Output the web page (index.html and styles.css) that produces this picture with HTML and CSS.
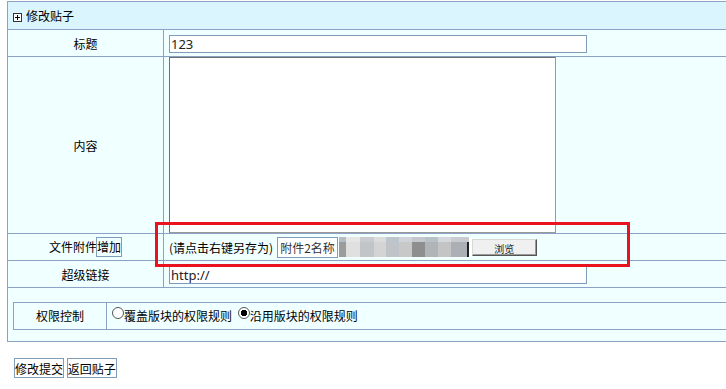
FILE: index.html
```html
<!DOCTYPE html>
<html lang="zh-CN">
<head>
    <meta charset="UTF-8">
    <title>修改贴子</title>
    <link rel="stylesheet" href="styles.css">
</head>
<body>
    <table class="form-table">
        <tr class="head-row">
            <td colspan="2">
                <svg class="plus-icon" width="9" height="9" viewBox="0 0 9 9">
                    <rect x="0.5" y="0.5" width="8" height="8" fill="#fff" stroke="#333"/>
                    <path d="M2 4.5h5M4.5 2v5" stroke="#000" stroke-width="1"/>
                </svg>修改贴子
            </td>
        </tr>
        <tr class="title-row">
            <td class="label">标题</td>
            <td class="field"><input type="text" class="text-input title-input" value="123"></td>
        </tr>
        <tr class="content-row">
            <td class="label">内容</td>
            <td class="field content-field"><textarea class="content-box"></textarea></td>
        </tr>
        <tr class="attach-row">
            <td class="label">文件附件<span class="add-btn">增加</span></td>
            <td class="field attach-field">
                <span class="tip">(请点击右键另存为)</span>
                <span class="name-box">附件2名称</span>
                <span class="blur-file"><span class="blur-top"></span><span class="blur-main"></span></span>
                <span class="browse-btn">浏览</span>
            </td>
        </tr>
        <tr class="link-row">
            <td class="label">超级链接</td>
            <td class="field"><input type="text" class="text-input link-input" value="http://"></td>
        </tr>
        <tr class="perm-row">
            <td colspan="2" class="perm-cell">
                <table class="perm-table">
                    <tr>
                        <td class="perm-label">权限控制</td>
                        <td class="perm-options">
                            <label class="radio-item"><input type="radio" name="perm">覆盖版块的权限规则</label>
                            <label class="radio-item"><input type="radio" name="perm" checked>沿用版块的权限规则</label>
                        </td>
                    </tr>
                </table>
            </td>
        </tr>
    </table>

    <div class="actions">
        <button class="plain-btn">修改提交</button>
        <button class="plain-btn">返回贴子</button>
    </div>

    <!-- 截图上的红色标注框 -->
    <div class="mark-box"></div>
</body>
</html>
```

FILE: styles.css
```css
html, body {
    overflow: hidden;
}
body {
    margin: 1px 0 0 7px;
    background-color: #fff;
    font-family: "Noto Sans CJK SC", "Noto Sans", sans-serif;
    font-size: 12px;
    color: #000;
    position: relative;
}
.form-table {
    width: 760px;
    border-collapse: collapse;
    background-color: #f0ffff;
}
.form-table td {
    border: 1px solid #8ba2c4;
    padding: 0;
}
.head-row td {
    height: 27px;
    background-color: #daf5fd;
    padding-left: 5px;
}
.plus-icon {
    vertical-align: -1px;
    margin-right: 4px;
}
.label {
    width: 155px;
    text-align: center;
}
.field {
    padding-left: 5px !important;
}
.title-row td {
    height: 26px;
}
.content-row td {
    height: 176px;
}
.content-field {
    vertical-align: top;
    line-height: 0;
}
.content-box {
    width: 387px;
    height: 176px;
    margin: 0;
    padding: 0;
    border: 1px solid #6f6f6f;
    border-right-color: #999;
    border-bottom-color: #999;
    box-sizing: border-box;
    background: #fff;
    resize: none;
}
.attach-row td {
    height: 26px;
}
.link-row td {
    height: 26px;
}
.text-input {
    height: 18px;
    box-sizing: border-box;
    border: 1px solid #7f9db9;
    padding: 0 1px;
    margin: 0;
    font-family: "Noto Sans", "Noto Sans CJK SC", sans-serif;
    font-size: 13px;
    color: #222;
    background: #fff;
    vertical-align: middle;
}
.title-input {
    width: 418px;
}
.link-input {
    width: 418px;
}
.add-btn {
    display: inline-block;
    border: 1px solid #7f9db9;
    padding: 0;
    line-height: 18px;
    margin-left: -1px;
}
.attach-field {
    white-space: nowrap;
    font-size: 0;
}
.attach-field > span {
    display: inline-block;
    vertical-align: middle;
    font-size: 12px;
}
.tip {
    margin-right: 4px;
}
.name-box {
    border: 1px solid #7f9db9;
    background: #fff;
    height: 19px;
    line-height: 19px;
    padding: 0 2px;
    color: #333;
}
.blur-file {
    width: 133px;
    height: 20px;
    margin-left: 1px;
}
.blur-top, .blur-main {
    display: block;
}
.blur-top {
    height: 5px;
    background: linear-gradient(90deg,
        #b4bcc4 0 7px, #e6e6e6 7px 21px, #c8ccd0 21px 35px, #dcdcdc 35px 47px,
        #bcc4cc 47px 60px, #d0d4d8 60px 73px, #c4c8cc 73px 86px, #b8c0c8 86px 99px,
        #d4d8dc 99px 112px, #c8ccd0 112px 130px, #ffffff 130px);
}
.blur-main {
    height: 15px;
    background: linear-gradient(90deg,
        #9c9c9c 0 7px, #e0e0e0 7px 21px, #c2c5c8 21px 35px, #d4d4d4 35px 47px,
        #c0c4c8 47px 60px, #c8c8c8 60px 73px, #8e8e8e 73px 86px, #b0b4b8 86px 99px,
        #c4c4c4 99px 112px, #acb0b4 112px 128px, #222 128px 130px, #ffffff 130px);
}
.browse-btn {
    width: 63px;
    height: 15px;
    margin-left: 0;
    border: 1px solid #555;
    border-top-color: #d8d8d8;
    border-left-color: #d8d8d8;
    box-shadow: inset -1px -1px 0 #999;
    background: #f0f0f0;
    text-align: center;
    font-size: 10px !important;
    line-height: 17px;
    overflow: hidden;
    color: #222;
}
.perm-cell {
    height: 53px;
    padding: 0 0 0 5px !important;
}
.perm-table {
    width: 740px;
    border-collapse: collapse;
    margin-top: 2px;
}
.perm-table td {
    height: 26px;
    border: 1px solid #8ba2c4;
}
.perm-label {
    width: 92px;
    text-align: center;
}
.perm-options {
    padding-left: 5px !important;
}
.radio-item {
    margin-right: 3px;
}
.radio-item input {
    -webkit-appearance: none;
    appearance: none;
    width: 12px;
    height: 12px;
    margin: 0;
    border: 1px solid #555;
    border-radius: 50%;
    background: #fff;
    vertical-align: 2px;
}
.radio-item input:checked {
    background: radial-gradient(circle, #000 0 3px, #fff 3.5px);
}
.actions {
    margin-top: 16px;
    margin-left: 7px;
}
.plain-btn {
    font-family: "Noto Sans CJK SC", sans-serif;
    font-size: 12px;
    height: 20px;
    padding: 0;
    margin: 0;
    border: 1px solid #7f9db9;
    background: #fff;
    color: #000;
}
.mark-box {
    position: absolute;
    left: 148px;
    top: 221px;
    width: 469px;
    height: 39px;
    border: 3px solid #e8131e;
}
```
